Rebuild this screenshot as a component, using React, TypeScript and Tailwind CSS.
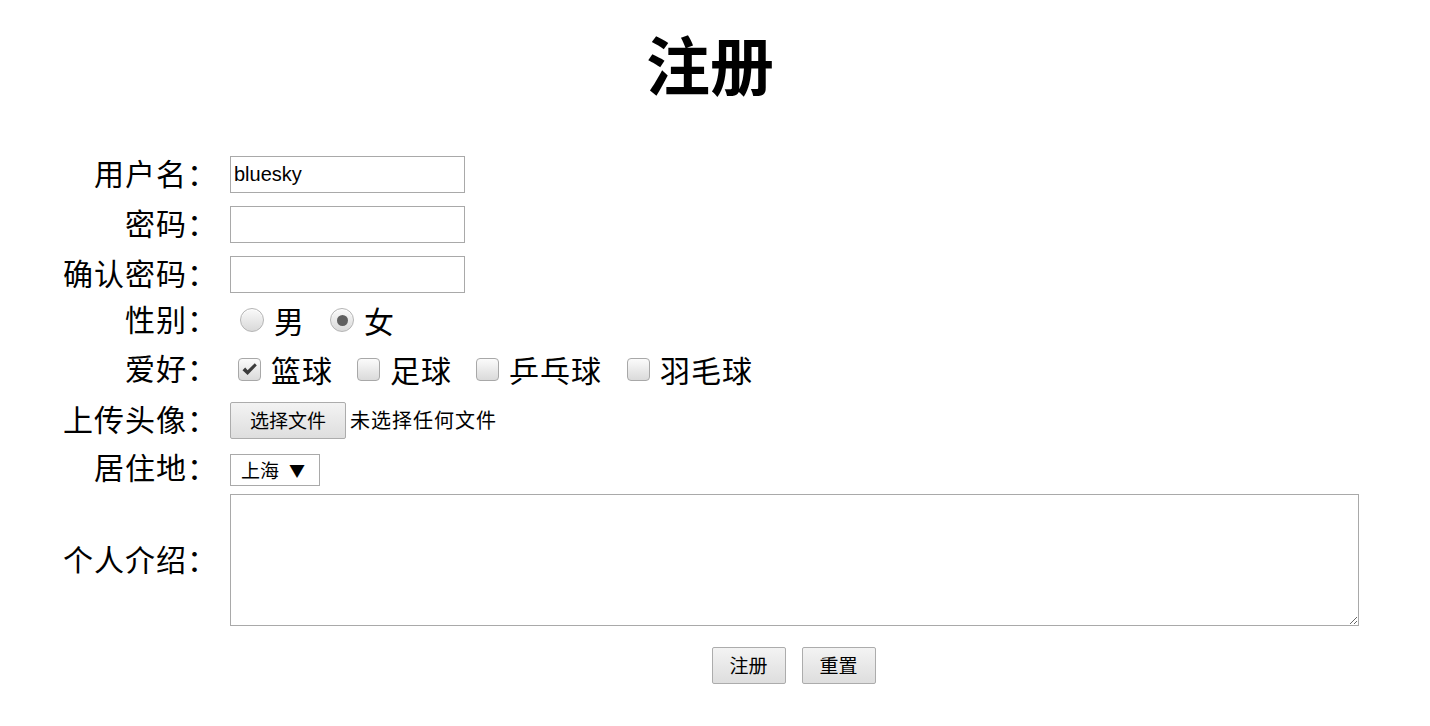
import React from "react";

const cjk = "font-['Noto_Sans_CJK_SC','Liberation_Serif',serif]";
const labelCls = `w-[218px] shrink-0 pb-[5px] text-right text-[30px] leading-none tracking-[1px] text-black ${cjk}`;
const uiFont = "font-['Noto_Sans_CJK_SC','Liberation_Sans',sans-serif]";
const optText = `ml-[10px] text-[30px] leading-none tracking-[1px] ${cjk}`;

function Radio({ checked }: { checked?: boolean }) {
  return (
    <span className="relative inline-flex h-[24px] w-[24px] shrink-0 items-center justify-center rounded-full border border-[#b4b4b4] bg-gradient-to-b from-[#fafafa] to-[#d9d9d9] shadow-[inset_0_1px_1px_rgba(255,255,255,0.8)]">
      {checked && <span className="h-[11px] w-[11px] rounded-full bg-[#5f5f5f]" />}
    </span>
  );
}

function Check({ checked }: { checked?: boolean }) {
  return (
    <span className="relative inline-flex h-[23px] w-[23px] shrink-0 items-center justify-center rounded-[4px] border border-[#a8a8a8] bg-gradient-to-b from-[#fbfbfb] to-[#dadada]">
      {checked && (
        <svg width="17" height="15" viewBox="0 0 17 15">
          <path d="M1.5 8.2 L4.2 5.6 L6.6 8.2 L13.8 1.2 L15.8 3.4 L6.6 13 Z" fill="#3c3c3c" />
        </svg>
      )}
    </span>
  );
}

function Row({ h, label, children, className = "" }: { h: string; label?: string; children?: React.ReactNode; className?: string }) {
  return (
    <div className={`flex items-center ${h} ${className}`}>
      <div className={labelCls}>{label}</div>
      <div className="ml-[12px] flex w-[1129px] items-center">{children}</div>
    </div>
  );
}

const inputCls =
  "h-[37px] w-[235px] border border-[#a9a9a9] bg-white px-[3px] text-[20px] text-black outline-none font-['Liberation_Sans',sans-serif]";

const btnCls = `flex items-center justify-center rounded-[2px] border border-[#acacac] bg-gradient-to-b from-[#f3f3f3] to-[#dedede] text-[19px] text-black ${uiFont}`;

export default function App() {
  return (
    <div className="h-[726px] w-[1430px] bg-white">
      <div className="flex h-[124px] w-[1420px] items-center justify-center">
        <h1 className={`text-[64px] font-bold leading-none text-black ${cjk}`}>注册</h1>
      </div>
      <div className="mt-[25px] flex flex-col">
        <Row h="h-[50px]" label="用户名：">
          <input className={inputCls} defaultValue="bluesky" />
        </Row>
        <Row h="h-[50px]" label="密码：">
          <input className={inputCls} type="password" />
        </Row>
        <Row h="h-[50px]" label="确认密码：">
          <input className={inputCls} type="password" />
        </Row>
        <Row h="h-[42px]" label="性别：">
          <span className="ml-[10px] inline-flex items-center">
            <Radio />
            <span className={optText}>男</span>
          </span>
          <span className="ml-[25px] inline-flex items-center">
            <Radio checked />
            <span className={optText}>女</span>
          </span>
        </Row>
        <Row h="h-[56px]" label="爱好：">
          <span className="ml-[8px] inline-flex items-center">
            <Check checked />
            <span className={optText}>篮球</span>
          </span>
          <span className="ml-[24px] inline-flex items-center">
            <Check />
            <span className={optText}>足球</span>
          </span>
          <span className="ml-[24px] inline-flex items-center">
            <Check />
            <span className={optText}>乒乓球</span>
          </span>
          <span className="ml-[25px] inline-flex items-center">
            <Check />
            <span className={optText}>羽毛球</span>
          </span>
        </Row>
        <Row h="h-[46px]" label="上传头像：">
          <div className={`${btnCls} h-[37px] w-[116px]`}>选择文件</div>
          <span className={`ml-[4px] text-[20px] leading-none tracking-[1px] text-black ${uiFont}`}>未选择任何文件</span>
        </Row>
        <Row h="h-[51px]" label="居住地：">
          <div className={`mt-[2px] flex h-[32px] w-[90px] items-center border border-[#a9a9a9] bg-white pl-[10px] text-[19px] leading-none text-black ${uiFont}`}>
            上海
            <span className="ml-[10px] text-[16px]">▼</span>
          </div>
        </Row>
        <Row h="h-[132px]" label="个人介绍：">
          <textarea className="h-[132px] w-[1129px] border border-[#a9a9a9] bg-white outline-none" />
        </Row>
        <Row h="h-[37px]" className="mt-[21px]">
          <div className="flex w-full justify-center gap-[16px] pr-[2px]">
            <div className={`${btnCls} h-[37px] w-[74px]`}>注册</div>
            <div className={`${btnCls} h-[37px] w-[74px]`}>重置</div>
          </div>
        </Row>
      </div>
    </div>
  );
}
